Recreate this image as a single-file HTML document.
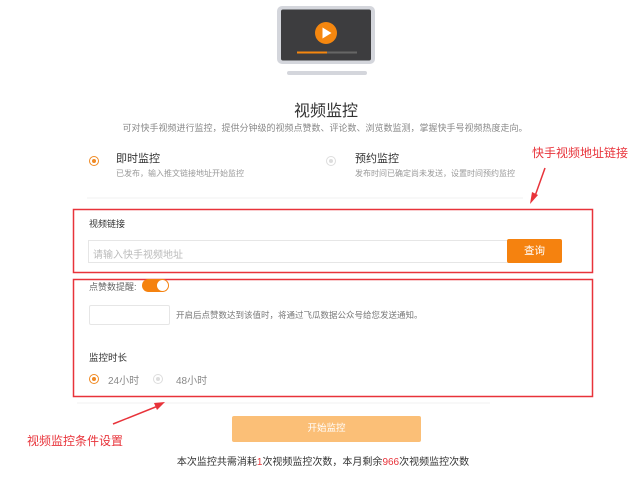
<!DOCTYPE html>
<html><head><meta charset="utf-8"><style>
*{margin:0;padding:0;box-sizing:border-box}
body{width:640px;height:483px;background:#fff;position:relative;overflow:hidden;font-family:"Liberation Sans","Noto Sans CJK SC",sans-serif;color:#333}
.a{position:absolute;white-space:nowrap}
.radio{position:absolute;width:10px;height:10px;border-radius:50%;border:1px solid #f08a24}
.radio::after{content:"";position:absolute;left:2px;top:2px;width:4px;height:4px;border-radius:50%;background:#f08a24}
.radio.off{border-color:#ddd}
.radio.off::after{background:#ddd}
.red{color:#e8333a}
</style></head><body>
<svg class="a" style="left:0;top:0" width="640" height="483">
<rect x="277" y="6" width="98" height="58" rx="5" fill="#d4d6dc"/>
<rect x="281" y="9.5" width="90" height="51" rx="2" fill="#3d3d3f"/>
<circle cx="326" cy="33" r="11" fill="#f5870f"/>
<path d="M322.5 27.5 L331.5 33 L322.5 38.5Z" fill="#fff"/>
<rect x="297" y="51.5" width="60" height="2" fill="#666"/>
<rect x="297" y="51.5" width="30" height="2" fill="#f5870f"/>
<rect x="287" y="71" width="80" height="4" rx="2" fill="#d4d6dc"/>
<line x1="87" y1="198" x2="523" y2="198" stroke="#f0f0f0"/>
<line x1="77" y1="403" x2="490" y2="403" stroke="#f0f0f0"/>
<rect x="73.5" y="209.5" width="519" height="63" fill="none" stroke="#e8333a" stroke-width="1.5"/>
<rect x="73.5" y="279.5" width="519" height="117" fill="none" stroke="#e8333a" stroke-width="1.5"/>
<path d="M545 168 L535 196" stroke="#e8333a" stroke-width="1.5"/>
<path d="M530 204 L532 192 L538 195Z" fill="#e8333a"/>
<path d="M113 424 L158 406" stroke="#e8333a" stroke-width="1.5"/>
<path d="M165 402 L154 403 L157 410Z" fill="#e8333a"/>
</svg>
<div class="a" style="left:0;width:652px;text-align:center;top:97px;font-size:16px;color:#333">视频监控</div>
<div class="a" style="left:0;width:650px;text-align:center;top:121px;font-size:9px;color:#888">可对快手视频进行监控，提供分钟级的视频点赞数、评论数、浏览数监测，掌握快手号视频热度走向。</div>
<div class="radio" style="left:89px;top:156px"></div>
<div class="a" style="left:116px;top:150px;font-size:11px">即时监控</div>
<div class="a" style="left:116px;top:168px;font-size:8px;color:#999">已发布，输入推文链接地址开始监控</div>
<div class="radio off" style="left:326px;top:156px"></div>
<div class="a" style="left:355px;top:150px;font-size:11px">预约监控</div>
<div class="a" style="left:355px;top:168px;font-size:8px;color:#999">发布时间已确定尚未发送，设置时间预约监控</div>
<div class="a red" style="left:532px;top:144px;font-size:12px">快手视频地址链接</div>
<div class="a" style="left:89px;top:217px;font-size:9px">视频链接</div>
<div class="a" style="left:88px;top:240px;width:420px;height:23px;border:1px solid #e6e6e6;border-right:none;font-size:10px;color:#bbb;padding:5px 4px">请输入快手视频地址</div>
<div class="a" style="left:507px;top:239px;width:55px;height:24px;background:#f5820f;color:#fff;font-size:10.5px;text-align:center;line-height:24px;border-radius:2px">查询</div>
<div class="a" style="left:89px;top:280px;font-size:9px;color:#666">点赞数提醒:</div>
<div class="a" style="left:142px;top:279px;width:27px;height:13px;border-radius:7px;background:#f5820f"><div style="position:absolute;right:1px;top:1px;width:11px;height:11px;border-radius:50%;background:#fff"></div></div>
<div class="a" style="left:89px;top:305px;width:81px;height:20px;border:1px solid #e6e6e6;border-radius:2px"></div>
<div class="a" style="left:176px;top:309px;font-size:8.5px;color:#777">开启后点赞数达到该值时，将通过飞瓜数据公众号给您发送通知。</div>
<div class="a" style="left:89px;top:350px;font-size:9.5px">监控时长</div>
<div class="radio" style="left:89px;top:374px"></div>
<div class="a" style="left:108px;top:372px;font-size:10px;color:#888">24小时</div>
<div class="radio off" style="left:153px;top:374px"></div>
<div class="a" style="left:176px;top:372px;font-size:10px;color:#888">48小时</div>
<div class="a red" style="left:27px;top:432px;font-size:12px">视频监控条件设置</div>
<div class="a" style="left:232px;top:416px;width:189px;height:26px;background:#fbbf77;border-radius:2px;color:#fff;font-size:9.5px;text-align:center;line-height:26px">开始监控</div>
<div class="a" style="left:0;width:646px;text-align:center;top:453px;font-size:10px;color:#333">本次监控共需消耗<span class="red">1</span>次视频监控次数，本月剩余<span class="red">966</span>次视频监控次数</div>
</body></html>
